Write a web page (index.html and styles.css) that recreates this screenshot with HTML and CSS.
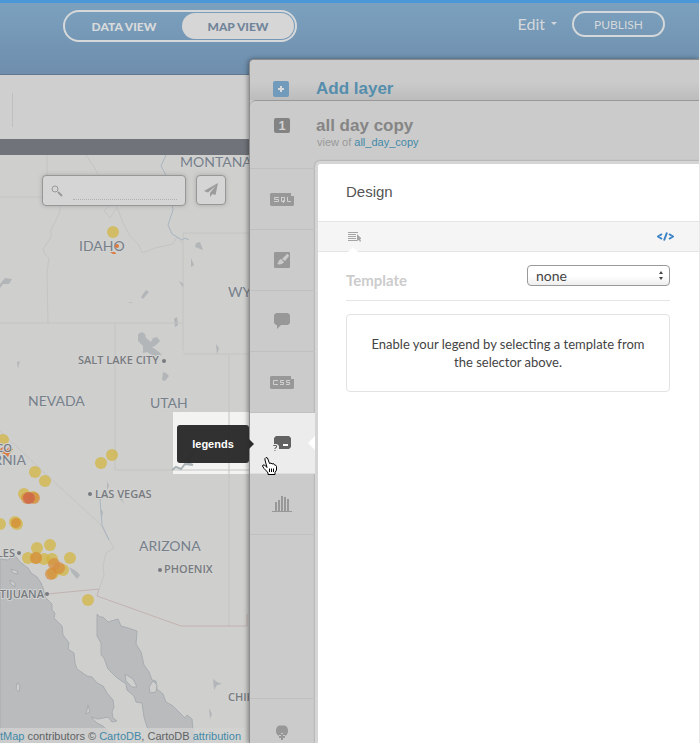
FILE: index.html
```html
<!DOCTYPE html>
<html lang="en">
<head>
<meta charset="utf-8">
<title>Map view</title>
<link rel="stylesheet" href="styles.css">
</head>
<body>
<div class="app">
  <header class="topbar">
    <nav class="views" aria-label="View">
      <a class="view" href="#data">DATA VIEW</a>
      <a class="view view-active" href="#map">MAP VIEW</a>
    </nav>
    <div class="actions">
      <button class="edit" type="button">Edit</button>
      <button class="publish" type="button">PUBLISH</button>
    </div>
  </header>

  <main class="workspace">
    <div class="toolbar"><span class="divider"></span></div>
    <div class="strip"></div>
    <div class="map">
      <svg class="canvas" viewBox="0 155 249 588" preserveAspectRatio="xMinYMin slice" aria-label="Map of the western United States">
        <rect class="lit" x="173" y="412" width="76" height="62"/>
        <g class="water">
          <path d="M0 559L8 560L14 555L17 558L20 562L28 568L31 573L37 577L41 583L43 588L45 597L52 604L52 610L55 613L54 618L62 626L63 635L69 643L68 649L74 653L75 663L77 669L87 676L92 677L97 683L103 686L107 693L113 700L114 707L112 712L113 718L117 721L112 722L108 717L98 719L91 717L97 723L103 726L109 732L115 743L0 743Z"/>
          <path d="M97 614L100 617L103 617L108 622L118 619L121 626L128 628L137 631L136 644L141 652L144 665L149 672L152 680L156 681L157 689L163 694L166 702L173 706L180 713L185 718L187 715L192 719L194 743L159 743L154 738L147 727L144 717L142 703L136 702L134 696L127 690L126 684L116 677L108 669L104 658L101 655L101 643L97 636Z"/>
        </g>
        <g class="lakes">
          <path d="M69 567L76 571L80 575L77 579L72 573Z"/>
          <path d="M138 334L142 332L145 334L146 338L151 342L153 338L157 337L160 341L155 346L152 347L159 352L162 355L154 356L147 352L143 353L143 346L138 341Z"/>
          <path d="M163 372L166 373L169 376L165 381L162 380ZM0 284L5 278L12 279L9 284L3 284L0 288ZM196 243L200 242L203 250L195 247ZM191 258L194 265L191 267ZM179 281L184 284L183 288ZM141 297L146 290L149 292L143 299ZM128 302L132 302L131 303ZM174 319L177 317L178 325L175 327ZM17 362L20 361L19 364L18 369ZM216 344L219 348L217 355ZM107 481L109 486L107 490ZM100 508L103 512L102 518ZM121 498L125 504L119 498ZM213 679L217 682L222 684L217 685L214 690ZM209 708L212 714L210 719Z"/>
        </g>
        <g class="island">
          <path d="M11 569L17 571L18 574L13 573ZM10 580L15 583L15 587L11 584ZM17 683L20 685L19 692L16 689ZM88 705L90 712L86 714ZM125 674L133 679L137 687L132 687L126 681ZM153 681L157 685L156 692L150 693L149 687Z"/>
        </g>
        <g class="borders">
          <path d="M47 155V197H0M47 197H59L60 211L56 220L51 230L51 237L43 249L45 254L49 258L47 273L48 323H183M0 323H48M115 323V470H249M229 354V626M183 323V233H249M86 155L93 165L100 178L109 180L117 196L104 211L110 218L117 207L123 223L130 236L139 245L142 253L155 248L173 244L177 237L183 244M183 351V323M183 354H249M0 431L50 478L101 525M101 525L106 535L114 548L106 553L103 566L104 575L99 590"/>
        </g>
        <path class="frontier" d="M47 594L99 589L97 596L181 626H247V614"/>
        <path class="river" d="M166 155L161 166L167 177L173 210L168 225L172 234L182 240L185 238L189 240"/>
        <path class="river" d="M107 490L100 500L102 525L109 540"/>
        <path class="lake" d="M172 470L176 467L181 469L185 464L193 465L188 463L190 456L194 453L196 448"/>

        <g class="marks">
          <circle cx="113" cy="232" r="6"/><circle cx="3" cy="440" r="6"/>
          <circle cx="101" cy="463" r="6"/><circle cx="112" cy="455" r="6"/>
          <circle cx="35" cy="472" r="6"/><circle cx="45" cy="481" r="6"/>
          <circle cx="24" cy="494" r="6"/><circle cx="33" cy="497" r="6"/>
          <circle cx="0" cy="524" r="6"/><circle cx="15" cy="522" r="6"/><circle cx="17" cy="524" r="6"/>
          <circle cx="37" cy="548" r="6"/><circle cx="50" cy="545" r="6"/><circle cx="70" cy="558" r="6"/>
          <circle cx="28" cy="558" r="6"/><circle cx="36" cy="558" r="6"/><circle cx="44" cy="559" r="6"/>
          <circle cx="52" cy="559" r="6"/><circle cx="63" cy="570" r="6"/><circle cx="53" cy="573" r="6"/>
          <circle cx="88" cy="600" r="6"/>
        </g>
        <g class="marks marks-warm">
          <circle cx="34" cy="498" r="6"/><circle cx="27" cy="498" r="6"/><circle cx="16" cy="523" r="5"/><circle cx="36" cy="558" r="6"/>
          <circle cx="54" cy="564" r="6"/><circle cx="59" cy="568" r="6"/><circle cx="51" cy="574" r="6"/>
        </g>
        <circle class="hot" cx="29" cy="498" r="6"/>
        <path class="ember" d="M110 252L115 252L116 254L113 254ZM0 449L3 447L6 450L9 447L13 449L10 453L8 457L5 454L1 453Z"/>

        <g class="states">
          <text x="180" y="167">MONTANA</text><text x="79" y="251">IDAHO</text>
          <text x="228" y="297">WYOMING</text><text x="28" y="406">NEVADA</text>
          <text x="150" y="408">UTAH</text><text x="139" y="551">ARIZONA</text>
          <text x="26" y="465" text-anchor="end">CALIFORNIA</text>
        </g>
        <circle class="ember" cx="117" cy="246" r="2"/>
        <g class="cities">
          <text x="78" y="364">SALT LAKE CITY</text><circle cx="164" cy="361" r="2"/>
          <text x="95" y="498">LAS VEGAS</text><circle cx="90" cy="494" r="2"/>
          <text x="164" y="573">PHOENIX</text><circle cx="160" cy="570" r="2"/>
          <text x="44" y="598" text-anchor="end">TIJUANA</text><circle cx="47" cy="594" r="2"/>
          <text x="15" y="557" text-anchor="end">LOS ANGELES</text><circle cx="19" cy="553" r="2"/>
          <text x="12" y="452" text-anchor="end">SAN FRANCISCO</text>
          <text x="228" y="701">CHIHUAHUA</text>
        </g>
      </svg>
      <form class="search">
        <label class="search-box">
          <svg class="lens" viewBox="0 0 12 12" aria-hidden="true"><circle cx="4" cy="4" r="3"/><path class="handle" d="M7 7L11 11"/></svg>
          <input class="query" type="text" aria-label="Search the map">
        </label>
        <button class="locate" type="button" aria-label="Locate">
          <svg viewBox="0 0 14 14" aria-hidden="true"><path d="M14 0L0 8L4 9.500L12 2.500L6 10V14L8.500 11L11.500 12Z"/></svg>
        </button>
      </form>
      <p class="credits"><a href="#osm">OpenStreetMap</a> contributors © <a href="#cartodb">CartoDB</a>, CartoDB <a href="#attribution">attribution</a></p>
    </div>
  </main>

  <aside class="panel">
    <button class="add-layer" type="button">
      <span class="plus"><svg viewBox="0 0 16 16" aria-hidden="true"><path d="M5 8H11M8 5V11"/></svg></span>
      <span>Add layer</span>
    </button>
    <section class="layer">
      <nav class="rail" aria-label="Layer tools">
        <span class="slot slot-first"><b class="number">1</b></span>
        <a class="slot" href="#sql" aria-label="SQL"><svg width="24" height="13" viewBox="0 0 24 13" aria-hidden="true"><path class="shape" d="M1 0H21V3H24V12L23 13H1L0 12V1Z"/><path class="cut" d="M9 4.500H4.500V6.500H8.500V8.500H4M11 4.500H14.500V8.500H11.500V4.500M13.500 7V10M17.500 4V8.500H21"/></svg></a>
        <a class="slot" href="#wizard" aria-label="Wizard"><svg width="16" height="16" viewBox="0 0 16 16" aria-hidden="true"><rect class="shape" width="16" height="16" rx="1"/><path class="hole" d="M14 2L15 4L11 9L8 7L13 2ZM7 7L10 10C9 12 6 13 3 12C5 11 4 8 7 7Z"/></svg></a>
        <a class="slot" href="#infowindow" aria-label="Infowindow"><svg width="16" height="16" viewBox="0 0 16 16" aria-hidden="true"><path class="shape" d="M2 0H14L16 2V10L14 12H7L3 16V12H2L0 10V2Z"/></svg></a>
        <a class="slot" href="#css" aria-label="CSS"><svg width="24" height="13" viewBox="0 0 24 13" aria-hidden="true"><path class="shape" d="M1 0H21V3H24V12L23 13H1L0 12V1Z"/><path class="cut" d="M8 4.500H3.500V8.500H8M14 4.500H10.500V6.500H13.500V8.500H10M20 4.500H16.500V6.500H19.500V8.500H16"/></svg></a>
        <a class="slot slot-active" href="#legends" aria-describedby="tip"><svg width="18" height="15" viewBox="0 0 18 15" aria-hidden="true"><path class="shape" d="M3 0H16L18 2V11L16 13H6V10L4 8H1V2Z"/><path class="hole" d="M10 8H15V10H10Z"/><path class="query-mark" d="M0.500 10V9.500H3.500V11.500L2 12V13M2 14V15"/></svg><span class="tip" id="tip">legends</span>
          <svg class="hand" width="15" height="18" viewBox="0 0 15 18" aria-hidden="true"><path d="M6 17.500V16L4.500 14L2 11.500L0.500 9L1 8L2.500 8L5 10.500L3 3L3 1.500L4 0.500L5.500 1L7.500 6.500L9 6L10 7L11.500 6.500L12.500 8L13.500 8L14.500 9.500V13L13 15.500V17.500Z"/><path d="M7.500 11.500V15M9.500 11.500V15M11.500 11.500V15"/></svg></a>
        <a class="slot" href="#filters" aria-label="Filters"><svg width="20" height="16" viewBox="0 0 20 16" aria-hidden="true"><path class="shape" d="M0 15H20V16H0ZM3 6H5V15H3ZM6 4H8V15H6ZM9 0H11V15H9ZM12 1H14V15H12ZM15 3H17V15H15Z"/></svg></a>
        <a class="slot slot-last" href="#add" aria-label="Add data"><svg width="12" height="15" viewBox="0 0 12 15" aria-hidden="true"><path class="shape" d="M3 11L1 9.500C-1 6 0 2 3 0.500H9C12 2 13 6 11 9.500L9 11V10H7V8H5V10H3ZM5 9H7V11H9V13H7V15H5V13H3V11H5Z"/></svg></a>
      </nav>
      <div class="content">
        <div class="heading">
          <h1>all day copy</h1>
          <p>view of <a href="#table">all_day_copy</a></p>
        </div>
        <section class="design">
          <h2>Design</h2>
          <div class="tabs">
            <button class="tab tab-active" type="button" aria-label="Visual editor"><svg width="14" height="10" viewBox="0 0 14 10" aria-hidden="true"><path d="M0 0H10V1H0ZM0 2H8V3H0ZM0 4H8V5H0ZM0 6H8V7H0ZM0 8H10V9H0ZM9 2L13 6V7H12L13 9L12 10L11 8L9 9Z"/></svg></button>
            <button class="tab" type="button" aria-label="HTML editor"><svg width="17" height="9" viewBox="0 0 17 9" aria-hidden="true"><path class="code" d="M5 2L1 4.500L5 7M7 8.500L10 0.500M12 2L16 4.500L12 7"/></svg></button>
          </div>
          <div class="body">
            <div class="field">
              <label for="template">Template</label>
              <span class="picker"><select id="template"><option>none</option></select><svg width="4" height="10" viewBox="0 0 4 10" aria-hidden="true"><path d="M2 0L4 3H0ZM0 6H4L2 9Z"/></svg></span>
            </div>
            <p class="hint">Enable your legend by selecting a template from the selector above.</p>
          </div>
        </section>
      </div>
    </section>
  </aside>
</div>
</body>
</html>
```
FILE: styles.css
```css
* { box-sizing: border-box; }
body { margin: 0; background: #e9e9e9; font-family: "Liberation Sans", Arial, sans-serif; }
button, input, select { font: inherit; margin: 0; padding: 0; border: 0; background: none; }
a { text-decoration: none; color: #4389a8; }
h1, h2, p { margin: 0; }
svg { display: block; }

.app {
  display: grid;
  grid-template-columns: minmax(200px, 249fr) minmax(380px, 450fr);
  grid-template-rows: 59px 16px minmax(0, 1fr);
  height: 100vh;
  min-height: 640px;
  margin-right: 1px;
  overflow: hidden;
}

.topbar {
  grid-area: 1 / 1 / 3 / 3;
  display: flex;
  justify-content: space-between;
  align-items: flex-start;
  padding: 7px 34px 0 63px;
  border-top: 3px solid #4a98d8;
  border-bottom: 1px solid #62788f;
  background: linear-gradient(#7ba1be, #6e8eac);
  font-family: Lato, sans-serif;
}
.views { display: flex; padding: 1px; border: 2px solid #d6d8da; border-radius: 16px; font-size: 12px; font-weight: 900; }
.view { display: flex; justify-content: center; align-items: center; width: 116px; height: 26px; border-radius: 13px; color: #d8dadb; }
.view-active { width: 112px; background: #d6d6d6; color: #71859a; }
.actions { display: flex; align-items: center; gap: 15px; color: #d4d8db; }
.edit { display: flex; align-items: center; gap: 6px; color: inherit; font-size: 16px; }
.edit::after { content: ""; border: 3px solid transparent; border-top-color: #d4d8db; border-bottom: 0; }
.publish { width: 93px; height: 26px; margin-top: 1px; border: 2px solid #d4d8db; border-radius: 13px; color: inherit; font-size: 12px; }

.workspace { grid-area: 3 / 1; display: flex; flex-direction: column; min-height: 0; }
.toolbar { height: 64px; padding: 18px 12px; background: #cfcfcf; }
.divider { display: block; height: 34px; border-left: 1px solid #bfbfbf; }
.strip { height: 16px; background: #70747a; }
.map { flex: 1; position: relative; min-height: 0; overflow: hidden; background: #cfcfcd; }
.canvas { width: 100%; height: 100%; }
.lit { fill: #f3f3f2; }
.water { fill: #b9bbbd; stroke: #a8adb1; }
.lakes { fill: #b2b6b9; }
.island { fill: #cfcfcd; stroke: #a8adb1; }
.borders { fill: none; stroke: #c4c5c4; }
.frontier { fill: none; stroke: #c2b3b1; }
.river { fill: none; stroke: #a9b5c0; }
.lake { fill: none; stroke: #a9b3b6; stroke-width: 2; }
.marks { fill: #d3b43a; fill-opacity: .7; }
.marks-warm { fill: #d58b3c; }
.hot { fill: #cd6549; fill-opacity: .8; }
.ember { fill: #dc7a3f; }
.states { font-family: Lato, sans-serif; font-size: 14px; fill: #76808b; }
.cities { font-family: "Open Sans", sans-serif; font-size: 11px; font-weight: 600; fill: #777b80; }
.states text, .cities text { stroke: #d2d2d1; stroke-width: 2; paint-order: stroke; }

.search { position: absolute; top: 20px; left: 42px; display: flex; gap: 10px; }
.search-box, .locate { display: flex; align-items: center; border: 1px solid #979797; border-radius: 4px; background: #d5d5d5; box-shadow: 0 0 4px #8888; }
.search-box { gap: 10px; width: 144px; height: 31px; padding: 0 8px; }
.lens { flex: none; width: 12px; height: 12px; fill: none; stroke: #999; stroke-width: 1; }
.lens .handle { stroke-width: 2; }
.query { width: 104px; height: 18px; border-bottom: 1px dotted #b0b0b0; font-size: 12px; outline: 0; }
.locate { justify-content: center; width: 30px; height: 30px; }
.locate svg { width: 14px; height: 14px; fill: #9b9b9b; }
.credits { position: absolute; right: 3px; bottom: 0; padding: 1px 5px 0; background: #d2d2d1cc; color: #5f6264; font-size: 11px; line-height: 14px; white-space: nowrap; }

.panel {
  grid-area: 2 / 2 / 4 / 3;
  position: relative;
  display: flex;
  flex-direction: column;
  border: solid #8d8d8d;
  border-width: 1px 0 0 1px;
  border-radius: 5px 0 0 0;
  background: #cbcbcb;
  box-shadow: -1px 0 5px #0006;
}
.add-layer, .heading h1 { font-size: 17px; font-weight: 700; line-height: 20px; }
.add-layer { display: flex; align-items: center; gap: 27px; height: 40px; padding: 18px 23px 0; color: #558ead; border-radius: 4px 0 0 0; background: linear-gradient(#cbcbcb 55%, #bcbcbc); }
.plus { width: 16px; height: 16px; border-radius: 2px; background: #719abb; }
.plus svg { fill: none; stroke: #d4d8db; stroke-width: 2; }
.layer { flex: 1; display: grid; grid-template-columns: 65px minmax(0, 1fr); min-height: 0; border-top: 1px solid #999; border-radius: 6px 0 0 0; background: #cbcbcb; }
.rail { display: flex; flex-direction: column; }
.slot { position: relative; display: flex; justify-content: center; align-items: center; height: 61px; padding-right: 1px; border-bottom: 1px solid #c0c0c0; }
.slot-first { height: 68px; padding-bottom: 19px; }
.number { width: 16px; border-radius: 2px; background: #838383; color: #d2d2d2; font-size: 13px; line-height: 15px; text-align: center; }
.slot-last { height: 45px; margin-top: auto; padding-top: 22px; border-top: 1px solid #c0c0c0; border-bottom: 0; }
.shape { fill: #989898; }
.hole { fill: #cbcbcb; }
.cut { fill: none; stroke: #d0d0d0; }
.slot-active { background: #ececec; border-color: #dedede; }
.slot-active .shape { fill: #626262; }
.slot-active .hole { fill: #fff; }
.query-mark { fill: none; stroke: #626262; }
.slot-active::after { content: ""; position: absolute; right: 0; border: 7px solid transparent; border-left: 0; border-right-color: #fff; }
.tip { position: absolute; top: 12px; right: 100%; margin-right: 1px; width: 72px; border-radius: 3px; background: #2b2b2bf8; color: #fff; font-size: 11px; font-weight: 700; line-height: 38px; text-align: center; }
.tip::after { content: ""; position: absolute; top: 14px; left: 100%; border: 5px solid transparent; border-left-color: #2b2b2b; border-right: 0; }
.hand { position: absolute; left: 12px; bottom: -2px; z-index: 1; fill: #fff; stroke: #000; }

.content { display: flex; flex-direction: column; min-height: 0; }
.heading { height: 60px; padding: 15px 1px 0; color: #858585; }
.heading p { padding-left: 1px; font-size: 11px; line-height: 12px; color: #999; }
.design { flex: 1; border: solid #d5d5d5; border-width: 3px 0 0 3px; border-radius: 5px 0 0 0; background: #fff; box-shadow: 0 0 2px #0005; font-family: Lato, sans-serif; }
.design h2 { padding: 18px 28px 19px; color: #555; font-family: "Liberation Sans", Arial, sans-serif; font-size: 15px; font-weight: 400; line-height: 20px; }
.tabs { display: flex; justify-content: space-between; height: 31px; padding: 0 25px 0 30px; border: solid #e5e5e5; border-width: 1px 0; background: #f5f5f5; }
.tab { position: relative; }
.tab svg { fill: #a5a5a5; }
.tab-active::after { content: ""; position: absolute; left: 0; bottom: -1px; border: 5px solid transparent; border-top: 0; border-bottom-color: #fff; }
.tab .code { fill: none; stroke: #3b83c4; stroke-width: 2; }
.body { padding: 0 29px 0 28px; }
.field { display: flex; justify-content: space-between; align-items: flex-start; height: 49px; padding-top: 13px; border-bottom: 1px solid #e5e5e5; }
.field label { padding-top: 6px; color: #ccc; font-size: 15px; font-weight: 700; line-height: 18px; }
.picker { position: relative; width: 143px; }
.picker select { display: block; width: 100%; height: 21px; padding: 0 8px; border: 1px solid #999; border-radius: 4px; background: linear-gradient(#fff 50%, #eee); color: #444; font-size: 14px; line-height: 18px; appearance: none; }
.picker svg { position: absolute; right: 7px; top: 6px; fill: #444; pointer-events: none; }
.hint { margin-top: 13px; padding: 20px; border: 1px solid #e3e3e3; border-radius: 4px; color: #444; font-size: 13px; line-height: 18px; text-align: center; }
```
